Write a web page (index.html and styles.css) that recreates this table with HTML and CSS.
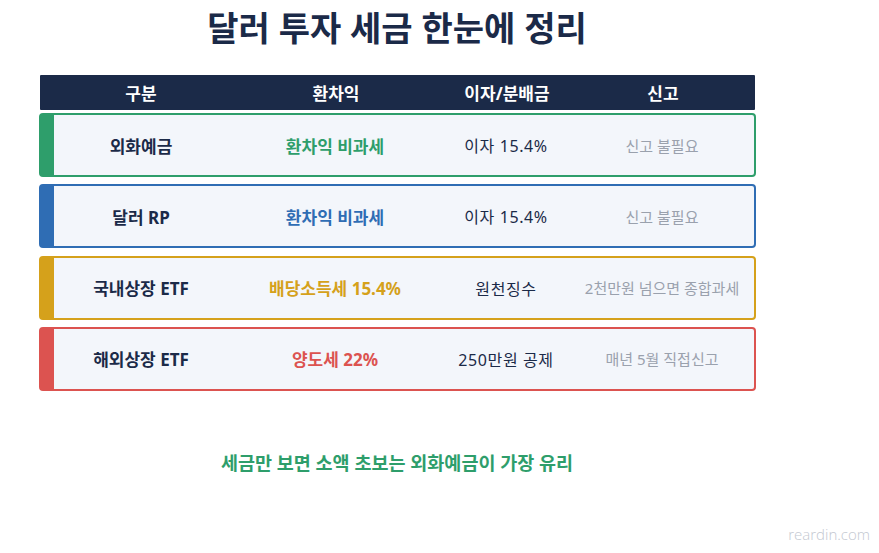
FILE: index.html
```html
<!DOCTYPE html>
<html lang="ko">
<head>
<meta charset="utf-8">
<link rel="stylesheet" href="styles.css">
</head>
<body>
<div class="page">
  <h1 class="title">달러 투자 세금 한눈에 정리</h1>
  <div class="table">
    <div class="head">
      <div class="c1">구분</div>
      <div class="c2">환차익</div>
      <div class="c3">이자/분배금</div>
      <div class="c4">신고</div>
    </div>
    <div class="row green">
      <div class="c1 name">외화예금</div>
      <div class="c2 tax">환차익 비과세</div>
      <div class="c3 inc">이자 15.4%</div>
      <div class="c4 rep">신고 불필요</div>
    </div>
    <div class="row blue">
      <div class="c1 name">달러 RP</div>
      <div class="c2 tax">환차익 비과세</div>
      <div class="c3 inc">이자 15.4%</div>
      <div class="c4 rep">신고 불필요</div>
    </div>
    <div class="row gold">
      <div class="c1 name">국내상장 ETF</div>
      <div class="c2 tax">배당소득세 15.4%</div>
      <div class="c3 inc">원천징수</div>
      <div class="c4 rep">2천만원 넘으면 종합과세</div>
    </div>
    <div class="row red">
      <div class="c1 name">해외상장 ETF</div>
      <div class="c2 tax">양도세 22%</div>
      <div class="c3 inc">250만원 공제</div>
      <div class="c4 rep">매년 5월 직접신고</div>
    </div>
  </div>
  <p class="note">세금만 보면 소액 초보는 외화예금이 가장 유리</p>
  <div class="brand">reardin.com</div>
</div>
</body>
</html>
```
FILE: styles.css
```css
* { box-sizing: border-box; }
html, body { margin: 0; padding: 0; background: #ffffff; }
body {
  font-family: "Noto Sans", "Noto Sans CJK KR", sans-serif;
  width: 879px;
  height: 553px;
  overflow: hidden;
}
.page {
  position: relative;
  width: 879px;
  height: 553px;
}
.title {
  margin: 0;
  height: 56px;
  line-height: 56px;
  text-align: center;
  width: 794px;
  font-size: 34px;
  font-weight: 700;
  color: #1b2a48;
}
.table {
  margin-top: 19px;
  margin-left: 39px;
  width: 717px;
  display: flex;
  flex-direction: column;
}
.head {
  margin: 0 1px 3px 1px;
  height: 35px;
  background: #1b2a48;
  color: #ffffff;
  font-weight: 700;
  font-size: 17px;
  display: grid;
  grid-template-columns: 202px 188px 154px 158px 1fr;
  align-items: center;
  text-align: center;
  border-radius: 1px;
}
.row {
  height: 64px;
  margin-bottom: 7.3px;
  background: #f3f6fb;
  border: 2px solid;
  border-left-width: 15px;
  border-radius: 4px;
  display: grid;
  grid-template-columns: 174px 214px 128px 1fr;
  align-items: center;
  text-align: center;
}
.green { border-color: #2e9e6b; }
.blue { border-color: #2f6db4; }
.gold { border-color: #d5a11b; }
.red { border-color: #dc5350; }
.name { font-size: 17px; font-weight: 700; color: #1b2a48; white-space: nowrap; }
.tax { font-size: 17px; font-weight: 700; white-space: nowrap; }
.green .tax { color: #2e9e6b; }
.blue .tax { color: #2f6db4; }
.gold .tax { color: #d5a11b; }
.red .tax { color: #dc5350; }
.inc { font-size: 16px; letter-spacing: 0.6px; color: #1b2a48; white-space: nowrap; }
.rep { font-size: 15px; color: #9aa1ad; white-space: nowrap; }
.note {
  margin: 0;
  margin-top: 52px;
  width: 794px;
  text-align: center;
  font-size: 18.5px;
  font-weight: 700;
  color: #2e9e6b;
  line-height: 26px;
}
.brand {
  position: absolute;
  right: 9px;
  bottom: 9px;
  font-family: "Open Sans", "Noto Sans", sans-serif;
  font-size: 15px;
  font-weight: 300;
  color: #c3c8d1;
}
```
